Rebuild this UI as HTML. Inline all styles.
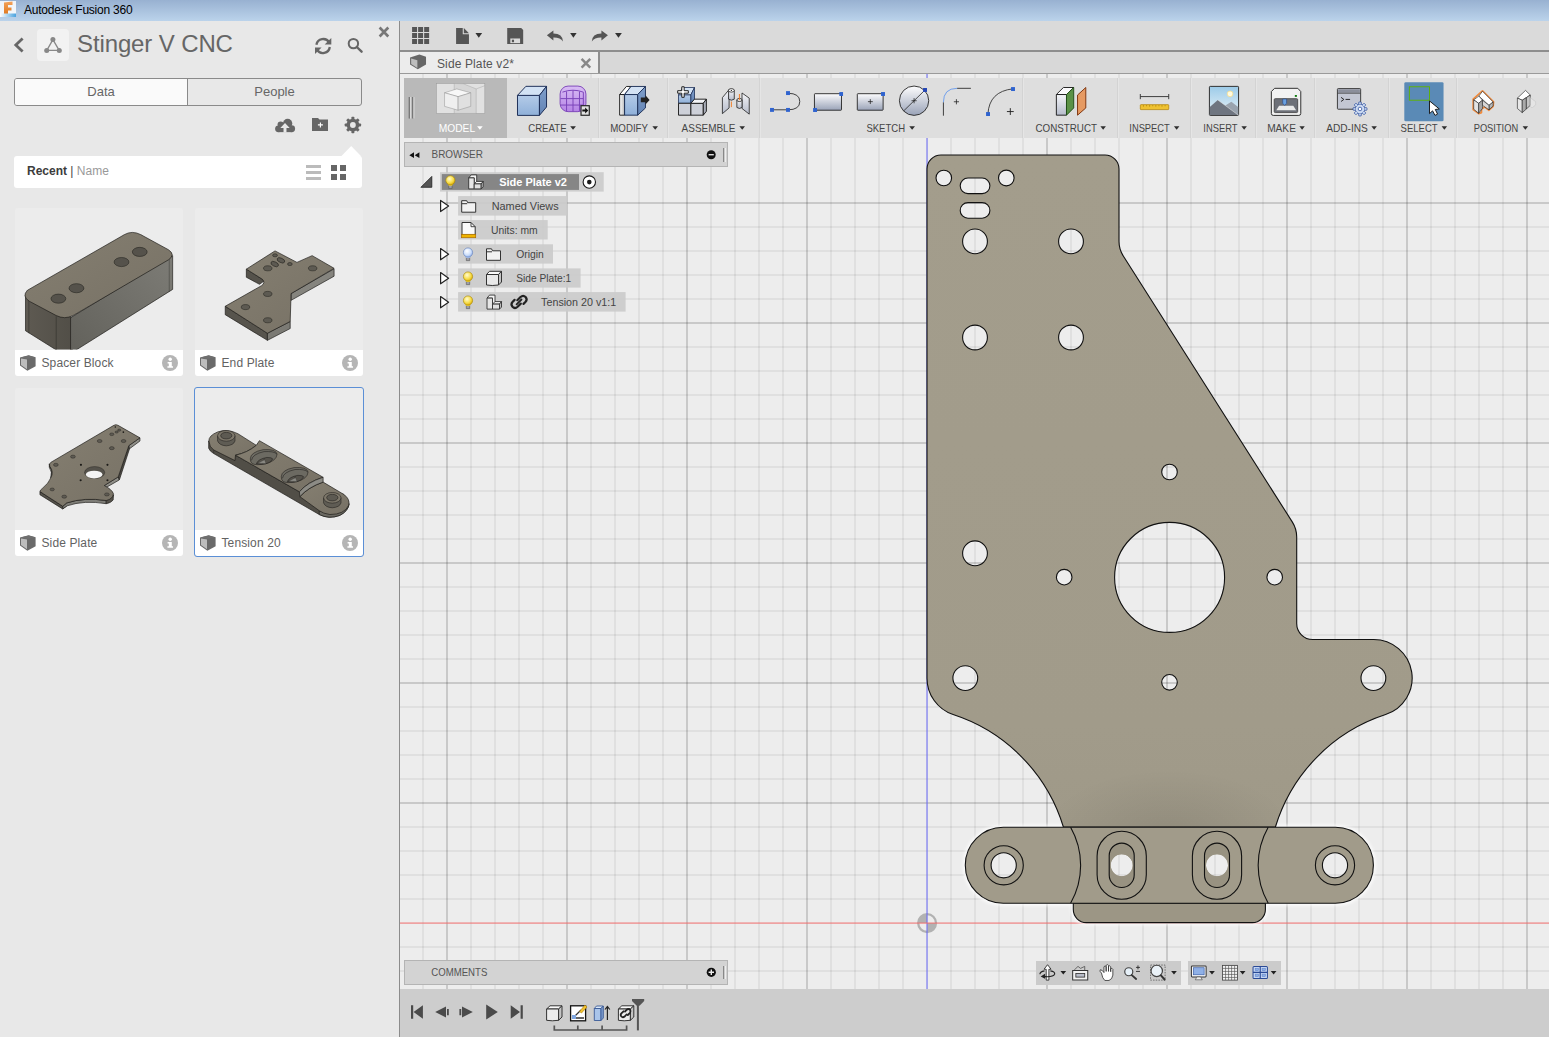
<!DOCTYPE html>
<html>
<head>
<meta charset="utf-8">
<title>Autodesk Fusion 360</title>
<style>
html,body{margin:0;padding:0;}
body{width:1549px;height:1037px;overflow:hidden;position:relative;background:#e8e8e8;font-family:"Liberation Sans",sans-serif;color:#555;}
.abs{position:absolute;}
#titlebar{left:0;top:0;width:1549px;height:21px;background:linear-gradient(#98b1d1,#bbd3eb);}
#titlebar .t{left:24px;top:2px;letter-spacing:-0.23px;font-size:12px;color:#000;line-height:16px;white-space:nowrap;}
#left{left:0;top:21px;width:399px;height:1016px;background:#e8e8e8;}
#vdiv{left:399px;top:21px;width:1px;height:1016px;background:#8c8c8c;}
#topbar{left:400px;top:21px;width:1149px;height:29px;background:#dadada;}
#topline{left:400px;top:50px;width:1149px;height:2px;background:#8e8e8e;}
#tabbar{left:400px;top:52px;width:1149px;height:21px;background:#d8d8d8;}
#tabline{left:400px;top:73px;width:1149px;height:1px;background:#9a9a9a;}
#tab{left:400px;top:52px;width:198px;height:21px;background:#ececec;border-right:2px solid #8e8e8e;}
#canvas{left:400px;top:74px;width:1149px;height:915px;}
#bottombar{left:400px;top:989px;width:1149px;height:48px;background:#cdcdcd;}
.lbl{font-size:11px;color:#444;white-space:nowrap;line-height:12px;}
.card{background:#ececec;width:168px;height:168px;border-radius:3px;overflow:hidden;}
.card .cap{left:0;top:142px;width:168px;height:26px;background:#fff;}
.card .cap span{left:26.500px;top:6px;font-size:12px;color:#626262;line-height:14px;white-space:nowrap;letter-spacing:0.12px;}
</style>
</head>
<body>
<div id="titlebar" class="abs"><span class="abs t">Autodesk Fusion 360</span></div>
<div id="left" class="abs"></div>
<div id="vdiv" class="abs"></div>
<div id="topbar" class="abs"></div>
<div id="topline" class="abs"></div>
<div id="tabbar" class="abs"></div>
<div id="tabline" class="abs"></div>
<div id="tab" class="abs"></div>
<div id="canvas" class="abs"><svg class="abs" style="left:0;top:0" width="1149" height="915" viewBox="400 74 1149 915">
<defs><linearGradient id="pg" x1="0" y1="0" x2="0" y2="1"><stop offset="0" stop-color="#a39d8c"/><stop offset="0.85" stop-color="#a19b8a"/><stop offset="1" stop-color="#9f9988"/></linearGradient><radialGradient id="sh" gradientUnits="userSpaceOnUse" cx="1169" cy="832" r="125" gradientTransform="translate(1169 832) scale(1 0.5) translate(-1169 -832)"><stop offset="0" stop-color="#000" stop-opacity="0.085"/><stop offset="1" stop-color="#000" stop-opacity="0"/></radialGradient></defs>
<rect x="400" y="74" width="1149" height="915" fill="#ededed"/>
<path d="M423 74V989M471 74V989M495 74V989M519 74V989M543 74V989M591 74V989M615 74V989M639 74V989M663 74V989M711 74V989M735 74V989M759 74V989M783 74V989M831 74V989M855 74V989M879 74V989M903 74V989M951 74V989M975 74V989M999 74V989M1023 74V989M1071 74V989M1095 74V989M1119 74V989M1143 74V989M1191 74V989M1215 74V989M1239 74V989M1263 74V989M1311 74V989M1335 74V989M1359 74V989M1383 74V989M1431 74V989M1455 74V989M1479 74V989M1503 74V989" stroke="#000" stroke-opacity="0.075" stroke-width="1.5" fill="none"/>
<path d="M400 227H1549M400 251H1549M400 275H1549M400 299H1549M400 347H1549M400 371H1549M400 395H1549M400 419H1549M400 467H1549M400 491H1549M400 515H1549M400 539H1549M400 587H1549M400 611H1549M400 635H1549M400 659H1549M400 707H1549M400 731H1549M400 755H1549M400 779H1549M400 827H1549M400 851H1549M400 875H1549M400 899H1549M400 947H1549M400 971H1549" stroke="#000" stroke-opacity="0.075" stroke-width="1.5" fill="none"/>
<path d="M447 74V989M567 74V989M687 74V989M807 74V989M1047 74V989M1167 74V989M1287 74V989M1407 74V989M1527 74V989" stroke="#000" stroke-opacity="0.2" stroke-width="1.5" fill="none"/>
<path d="M400 203H1549M400 323H1549M400 443H1549M400 563H1549M400 683H1549M400 803H1549" stroke="#000" stroke-opacity="0.2" stroke-width="1.5" fill="none"/>
<g><circle cx="927.1" cy="923.1" r="8.9" fill="none" stroke="#b2b2b2" stroke-width="2.3"/><path d="M927.1 923.1V914.2A8.9 8.9 0 0 0 918.2 923.1Z" fill="#b2b2b2"/><path d="M927.1 923.1V932A8.9 8.9 0 0 0 936 923.1Z" fill="#b2b2b2"/></g>
<path d="M927.05 74V989" stroke="#6c6cf0" stroke-opacity="0.58" stroke-width="1.9" fill="none"/>
<path d="M400 923.1H1549" stroke="#f06c6c" stroke-opacity="0.58" stroke-width="1.9" fill="none"/>
<filter id="bl" x="-5%" y="-20%" width="110%" height="140%"><feGaussianBlur stdDeviation="1.6"/></filter>
<path d="M1003.3 827.3H1335.4A38 38 0 0 1 1335.4 903.3H1265.4V909.6A13 13 0 0 1 1252.4 922.6H1086.3A13 13 0 0 1 1073.3 909.6V903.3H1003.3A38 38 0 0 1 1003.3 827.3Z" fill="none" stroke="#fff" stroke-opacity="0.75" stroke-width="5" filter="url(#bl)"/>
<path d="M941 155H1105A14 14 0 0 1 1119 169V241.5Q1119 249.2 1123.3 256L1292.4 522.1Q1296.7 528.9 1296.7 537V623.5A16 16 0 0 0 1312.7 639.5H1373.4A38.5 38.5 0 0 1 1385.6 714.6A170.4 170.4 0 0 0 1275.4 827H1063.4A170.4 170.4 0 0 0 953.1 714.6A38.5 38.5 0 0 1 927 678.1V169A14 14 0 0 1 941 155ZM936.0 178a7.8 7.8 0 1 0 15.6 0a7.8 7.8 0 1 0 -15.6 0ZM998.5 178a7.8 7.8 0 1 0 15.6 0a7.8 7.8 0 1 0 -15.6 0ZM968.0 178H982.1a7.799999999999997 7.799999999999997 0 0 1 0 15.599999999999994H968.0a7.799999999999997 7.799999999999997 0 0 1 0 -15.599999999999994ZM968.0 202.6H982.1a7.799999999999997 7.799999999999997 0 0 1 0 15.599999999999994H968.0a7.799999999999997 7.799999999999997 0 0 1 0 -15.599999999999994ZM962.6 241.4a12.4 12.4 0 1 0 24.8 0a12.4 12.4 0 1 0 -24.8 0ZM1058.6 241.4a12.4 12.4 0 1 0 24.8 0a12.4 12.4 0 1 0 -24.8 0ZM962.6 337.5a12.4 12.4 0 1 0 24.8 0a12.4 12.4 0 1 0 -24.8 0ZM1058.6 337.5a12.4 12.4 0 1 0 24.8 0a12.4 12.4 0 1 0 -24.8 0ZM962.6 553.3a12.4 12.4 0 1 0 24.8 0a12.4 12.4 0 1 0 -24.8 0ZM952.9 678.1a12.4 12.4 0 1 0 24.8 0a12.4 12.4 0 1 0 -24.8 0ZM1361.0 678.1a12.4 12.4 0 1 0 24.8 0a12.4 12.4 0 1 0 -24.8 0ZM1161.7 472a7.8 7.8 0 1 0 15.6 0a7.8 7.8 0 1 0 -15.6 0ZM1056.4 577.2a7.8 7.8 0 1 0 15.6 0a7.8 7.8 0 1 0 -15.6 0ZM1266.9 577.2a7.8 7.8 0 1 0 15.6 0a7.8 7.8 0 1 0 -15.6 0ZM1161.7 682.3a7.8 7.8 0 1 0 15.6 0a7.8 7.8 0 1 0 -15.6 0ZM1114.6 577.4a55 55 0 1 0 110 0a55 55 0 1 0 -110 0Z" fill="url(#pg)" fill-rule="evenodd" stroke="#111" stroke-width="1.1"/>
<path d="M941 155H1105A14 14 0 0 1 1119 169V241.5Q1119 249.2 1123.3 256L1292.4 522.1Q1296.7 528.9 1296.7 537V623.5A16 16 0 0 0 1312.7 639.5H1373.4A38.5 38.5 0 0 1 1385.6 714.6A170.4 170.4 0 0 0 1275.4 827H1063.4A170.4 170.4 0 0 0 953.1 714.6A38.5 38.5 0 0 1 927 678.1V169A14 14 0 0 1 941 155ZM936.0 178a7.8 7.8 0 1 0 15.6 0a7.8 7.8 0 1 0 -15.6 0ZM998.5 178a7.8 7.8 0 1 0 15.6 0a7.8 7.8 0 1 0 -15.6 0ZM968.0 178H982.1a7.799999999999997 7.799999999999997 0 0 1 0 15.599999999999994H968.0a7.799999999999997 7.799999999999997 0 0 1 0 -15.599999999999994ZM968.0 202.6H982.1a7.799999999999997 7.799999999999997 0 0 1 0 15.599999999999994H968.0a7.799999999999997 7.799999999999997 0 0 1 0 -15.599999999999994ZM962.6 241.4a12.4 12.4 0 1 0 24.8 0a12.4 12.4 0 1 0 -24.8 0ZM1058.6 241.4a12.4 12.4 0 1 0 24.8 0a12.4 12.4 0 1 0 -24.8 0ZM962.6 337.5a12.4 12.4 0 1 0 24.8 0a12.4 12.4 0 1 0 -24.8 0ZM1058.6 337.5a12.4 12.4 0 1 0 24.8 0a12.4 12.4 0 1 0 -24.8 0ZM962.6 553.3a12.4 12.4 0 1 0 24.8 0a12.4 12.4 0 1 0 -24.8 0ZM952.9 678.1a12.4 12.4 0 1 0 24.8 0a12.4 12.4 0 1 0 -24.8 0ZM1361.0 678.1a12.4 12.4 0 1 0 24.8 0a12.4 12.4 0 1 0 -24.8 0ZM1161.7 472a7.8 7.8 0 1 0 15.6 0a7.8 7.8 0 1 0 -15.6 0ZM1056.4 577.2a7.8 7.8 0 1 0 15.6 0a7.8 7.8 0 1 0 -15.6 0ZM1266.9 577.2a7.8 7.8 0 1 0 15.6 0a7.8 7.8 0 1 0 -15.6 0ZM1161.7 682.3a7.8 7.8 0 1 0 15.6 0a7.8 7.8 0 1 0 -15.6 0ZM1114.6 577.4a55 55 0 1 0 110 0a55 55 0 1 0 -110 0Z" fill="url(#sh)" fill-rule="evenodd" stroke="none"/>
<path d="M1073.3 903.3V909.6A13 13 0 0 0 1086.3 922.6H1252.4A13 13 0 0 0 1265.4 909.6V903.3Z" fill="#9c9685" stroke="#111" stroke-width="1.1"/>
<path d="M1003.3 827.3H1335.4A38 38 0 0 1 1335.4 903.3H1003.3A38 38 0 0 1 1003.3 827.3ZM991.1 865.3a12.6 12.6 0 1 0 25.2 0a12.6 12.6 0 1 0 -25.2 0ZM1322.4 865.3a12.6 12.6 0 1 0 25.2 0a12.6 12.6 0 1 0 -25.2 0ZM1110.7 865.3a11 11 0 1 0 22 0a11 11 0 1 0 -22 0ZM1206 865.3a11 11 0 1 0 22 0a11 11 0 1 0 -22 0Z" fill="#a19b8a" fill-rule="evenodd" stroke="none"/>
<path d="M1003.3 827.3H1335.4A38 38 0 0 1 1335.4 903.3H1003.3A38 38 0 0 1 1003.3 827.3Z" fill="none" stroke="#111" stroke-width="1.1"/>
<path d="M1070.6 827.3A77 77 0 0 1 1070.6 903.3M1268.2 827.3A77 77 0 0 0 1268.2 903.3" fill="none" stroke="#111" stroke-width="1.1"/>
<circle cx="1003.7" cy="865.3" r="19.6" fill="none" stroke="#111" stroke-width="1.1"/>
<circle cx="1003.7" cy="865.3" r="12.6" fill="none" stroke="#111" stroke-width="1.1"/>
<circle cx="1335" cy="865.3" r="19.6" fill="none" stroke="#111" stroke-width="1.1"/>
<circle cx="1335" cy="865.3" r="12.6" fill="none" stroke="#111" stroke-width="1.1"/>
<rect x="1097.1000000000001" y="831.3" width="49.200" height="68" rx="24.600" fill="none" stroke="#111" stroke-width="1.1"/>
<path d="M1109.2 855.6a12.5 12.5 0 0 1 25 0V875a12.5 12.5 0 0 1 -25 0ZM1110.7 865.3a11 11 0 1 0 22 0a11 11 0 1 0 -22 0Z" fill="#989281" fill-rule="evenodd" stroke="none"/>
<rect x="1109.2" y="843.1" width="25" height="44.400" rx="12.500" fill="none" stroke="#111" stroke-width="1.1"/>
<rect x="1192.4" y="831.3" width="49.200" height="68" rx="24.600" fill="none" stroke="#111" stroke-width="1.1"/>
<path d="M1204.5 855.6a12.5 12.5 0 0 1 25 0V875a12.5 12.5 0 0 1 -25 0ZM1206 865.3a11 11 0 1 0 22 0a11 11 0 1 0 -22 0Z" fill="#989281" fill-rule="evenodd" stroke="none"/>
<rect x="1204.5" y="843.1" width="25" height="44.400" rx="12.500" fill="none" stroke="#111" stroke-width="1.1"/>
</svg></div>
<div id="bottombar" class="abs"></div>
<!-- LEFT PANEL -->
<svg class="abs" style="left:0;top:0" width="20" height="21" viewBox="0 0 20 21"><defs><linearGradient id="fg" x1="0" y1="0" x2="0" y2="1"><stop offset="0" stop-color="#f3a25a"/><stop offset="1" stop-color="#e07a22"/></linearGradient><linearGradient id="fb" x1="0" y1="0" x2="1" y2="0"><stop offset="0" stop-color="#fff"/><stop offset="1" stop-color="#4aa3df"/></linearGradient></defs>
<rect x="0" y="1" width="16" height="16" fill="#fff" fill-opacity="0.85"/><path d="M4 14V2.5L12.5 1.5V5H8V7.5H11.5V10.5H8V14Z" fill="url(#fg)"/><rect x="0" y="13.5" width="16" height="3.5" fill="url(#fb)"/></svg>
<svg class="abs" style="left:10px;top:34px" width="20" height="22" viewBox="10 34 20 22"><path d="M22.6 38.6L15.8 45.1L22.6 51.6" fill="none" stroke="#666" stroke-width="2.8"/></svg>
<div class="abs" style="left:37px;top:29px;width:32px;height:32px;background:#f2f2f2;border-radius:4px;"></div>
<svg class="abs" style="left:37px;top:29px" width="32" height="32" viewBox="37 29 32 32"><path d="M52.9 39.6L46.8 50.4H59.2Z" fill="none" stroke="#888" stroke-width="1.3"/><circle cx="52.9" cy="39.4" r="2.5" fill="#888"/><circle cx="46.7" cy="50.4" r="2.5" fill="#888"/><circle cx="59.3" cy="50.4" r="2.5" fill="#888"/></svg>
<div class="abs" id="ptitle" style="left:77px;top:30px;font-size:24px;letter-spacing:-0.12px;line-height:28px;color:#666;white-space:nowrap;">Stinger V CNC</div>
<svg class="abs" style="left:310px;top:22px" width="85" height="38" viewBox="310 22 85 38">
<g fill="none" stroke="#666" stroke-width="2.3"><path d="M316.4 44.8A6.9 6.9 0 0 1 329.2 42.5"/><path d="M329.8 47A6.9 6.9 0 0 1 317 49.6"/></g>
<path d="M331.3 38V44.6H324.7Z" fill="#666"/><path d="M315 54V47.4H321.6Z" fill="#666"/>
<circle cx="353.4" cy="43.6" r="4.7" fill="none" stroke="#666" stroke-width="2"/><path d="M356.8 47L361.6 51.7" stroke="#666" stroke-width="2.4" stroke-linecap="round"/>
<path d="M379.6 27.5L388.3 36.5M388.3 27.5L379.6 36.5" stroke="#777" stroke-width="2.6"/></svg>
<div class="abs" style="left:14px;top:78px;width:346px;height:26px;border:1px solid #8a8a8a;border-radius:3px;background:#e8e8e8;"></div>
<div class="abs" style="left:15px;top:79px;width:172px;height:26px;background:#fafafa;border-right:1px solid #8a8a8a;border-radius:2px 0 0 2px;"></div>
<div class="abs" style="left:15px;top:84px;width:172px;text-align:center;font-size:13px;line-height:16px;color:#666;">Data</div>
<div class="abs" style="left:188px;top:84px;width:173px;text-align:center;font-size:13px;line-height:16px;color:#666;">People</div>
<svg class="abs" style="left:270px;top:114px" width="95" height="22" viewBox="270 114 95 22">
<g transform="translate(260 110) scale(0.08197)"><g fill="#666"><circle cx="226" cy="230" r="42"/><circle cx="252" cy="178" r="38"/><circle cx="337" cy="165" r="57"/><circle cx="386" cy="228" r="42"/><rect x="226" y="190" width="160" height="80"/></g><path d="M305 158L362 220H323V274H287V220H248Z" fill="#e8e8e8"/></g>
<path d="M312 118H318L319.5 119.6H328V131H312Z" fill="#666"/><path d="M312 118.9H318.5" stroke="#e8e8e8" stroke-width="0" /><path d="M320.4 122.4V127.4M317.9 124.9H322.9" stroke="#fff" stroke-width="1.1"/>
<g transform="translate(352.9 125)"><circle r="4.6" fill="none" stroke="#666" stroke-width="3.4"/><g fill="#666"><rect x="-1.5" y="-8.2" width="3" height="3.2" rx="0.8"/><rect x="-1.5" y="-8.2" width="3" height="3.2" rx="0.8" transform="rotate(45)"/><rect x="-1.5" y="-8.2" width="3" height="3.2" rx="0.8" transform="rotate(90)"/><rect x="-1.5" y="-8.2" width="3" height="3.2" rx="0.8" transform="rotate(135)"/><rect x="-1.5" y="-8.2" width="3" height="3.2" rx="0.8" transform="rotate(180)"/><rect x="-1.5" y="-8.2" width="3" height="3.2" rx="0.8" transform="rotate(225)"/><rect x="-1.5" y="-8.2" width="3" height="3.2" rx="0.8" transform="rotate(270)"/><rect x="-1.5" y="-8.2" width="3" height="3.2" rx="0.8" transform="rotate(315)"/></g></g></svg>
<div class="abs" style="left:14px;top:156px;width:348px;height:32px;background:#fff;border-radius:3px;"></div>
<svg class="abs" style="left:300px;top:144px" width="65" height="40" viewBox="300 144 65 40"><path d="M341 156.5L351.2 146L361.4 156.5Z" fill="#fff"/>
<path d="M306 165H321V168H306ZM306 171H321V174H306ZM306 177H321V180H306Z" fill="#bbb"/><path d="M331 165H337V171H331ZM340 165H346V171H340ZM331 174H337V180H331ZM340 174H346V180H340Z" fill="#666"/></svg>
<div class="abs" style="left:27px;top:164px;font-size:12px;line-height:15px;white-space:nowrap;color:#444;"><b style="color:#3c3c3c">Recent</b> <span style="color:#444">|</span> <span style="color:#999">Name</span></div>
<!-- CARDS -->
<svg width="0" height="0" style="position:absolute"><defs>
<g id="cubeico"><path d="M0 2.6L8.6 0.3L15.6 2.2V11.3L7.4 15.8L0 10.6Z" fill="#6a6a6a"/><path d="M1 3.6L7 4.6V14.3L1 10.1Z" fill="#bdbdbd"/><path d="M0.6 2.6L8.6 0.6L15 2.3L7.4 4Z" fill="#6f6f6f"/></g>
<g id="infoico"><circle cx="8" cy="8" r="8" fill="#b5b5b5"/><circle cx="8.2" cy="4.3" r="1.7" fill="#fff"/><path d="M5.6 6.9H9.8V11.2H11V12.8H5.4V11.2H6.8V8.5H5.6Z" fill="#fff"/></g>
<linearGradient id="topf" x1="0" y1="0" x2="1" y2="1"><stop offset="0" stop-color="#857f71"/><stop offset="1" stop-color="#777165"/></linearGradient>
<linearGradient id="sideR" x1="0" y1="1" x2="1" y2="0"><stop offset="0" stop-color="#62615b"/><stop offset="1" stop-color="#7d7c76"/></linearGradient>
<linearGradient id="sideL" x1="0" y1="0" x2="1" y2="0"><stop offset="0" stop-color="#5e5a52"/><stop offset="1" stop-color="#514e47"/></linearGradient>
</defs></svg>

<div class="abs card" style="left:15px;top:208px;"><div class="abs cap"><span class="abs">Spacer Block</span></div>
<svg class="abs" style="left:-1px;top:-3px" width="172" height="175" viewBox="0 0 1019 1037">
<clipPath id="c1"><rect x="0" y="0" width="1019" height="857"/></clipPath>
<g clip-path="url(#c1)" stroke="#1c1b18" stroke-width="4" stroke-linejoin="round">
<path d="M68 540V745L255 862H345V668Z" fill="url(#sideL)"/>
<path d="M250 660V870" stroke="#2a2925" stroke-width="3"/>
<path d="M335 668V880L940 500V300Z" fill="url(#sideR)"/>
<path d="M920 320V515" stroke="#3a3935" stroke-width="3" fill="none"/>
<path d="M88 560V760" stroke="#2a2925" stroke-width="3" fill="none"/>
<path d="M80 505L655 175Q700 150 750 175L915 265Q960 295 915 325L350 655Q300 680 250 655L90 570Q45 540 80 505Z" fill="url(#topf)"/>
<g stroke-width="3"><ellipse cx="263" cy="555" rx="44" ry="27" fill="#55524b"/><ellipse cx="370" cy="493" rx="44" ry="27" fill="#55524b"/><ellipse cx="637" cy="338" rx="44" ry="27" fill="#55524b"/><ellipse cx="745" cy="278" rx="44" ry="27" fill="#55524b"/></g>
</g></svg>
<svg class="abs" style="left:5px;top:147px" width="16" height="16" viewBox="0 0 16 16"><use href="#cubeico"/></svg>
<svg class="abs" style="left:147px;top:147px" width="16" height="16" viewBox="0 0 16 16"><use href="#infoico"/></svg>
</div>

<div class="abs card" style="left:195px;top:208px;"><div class="abs cap"><span class="abs">End Plate</span></div>
<svg class="abs" style="left:-1px;top:-3px" width="172" height="175" viewBox="0 0 1019 1037">
<g stroke="#1c1b18" stroke-width="4" stroke-linejoin="round">
<path d="M185 600V650L435 802V760Z" fill="#57544d"/>
<path d="M435 760V802L570 732V690Z" fill="#7b7a74"/>
<path d="M575 525V565L830 422V378Z" fill="#85847e"/>
<path d="M310 380V428L388 470L418 448Z" fill="#55524b"/>
<path d="M480 272L610 340L700 300L830 375L575 525L570 690L435 760L185 600L400 478Q425 462 405 440L310 380Z" fill="url(#topf)"/>
<g stroke-width="3" fill="#5d5a52"><ellipse cx="437" cy="375" rx="25" ry="15"/><ellipse cx="703" cy="375" rx="25" ry="15"/><ellipse cx="437" cy="527" rx="25" ry="15"/><ellipse cx="305" cy="605" rx="25" ry="15"/><ellipse cx="437" cy="683" rx="25" ry="15"/><ellipse cx="480" cy="298" rx="14" ry="9"/><ellipse cx="568" cy="350" rx="14" ry="9"/><ellipse cx="515" cy="328" rx="24" ry="13" transform="rotate(25 515 328)"/><ellipse cx="478" cy="350" rx="24" ry="13" transform="rotate(25 478 350)"/></g>
</g></svg>
<svg class="abs" style="left:5px;top:147px" width="16" height="16" viewBox="0 0 16 16"><use href="#cubeico"/></svg>
<svg class="abs" style="left:147px;top:147px" width="16" height="16" viewBox="0 0 16 16"><use href="#infoico"/></svg>
</div>

<div class="abs card" style="left:15px;top:388px;"><div class="abs cap"><span class="abs">Side Plate</span></div>
<svg class="abs" style="left:15px;top:32px" width="120" height="100" viewBox="0 0 1244 1037">
<g stroke="#1c1b18" stroke-width="7" stroke-linejoin="round">
<path d="M103 742V775L338 922L380 892V860L340 895Z" fill="#55524b"/>
<path d="M340 895V922L385 890Q560 830 790 868V835Q560 800 380 860Z" fill="#7f7e78"/>
<path d="M790 835V868Q840 860 862 830L866 775Q850 815 790 835Z" fill="#55524b"/>
<path d="M770 680L780 705L925 622L915 590Z" fill="#8f8e88"/>
<path d="M1025 265L1032 298L927 620L915 590Z" fill="#4d4a44"/>
<path d="M1140 185V218L1032 298L1025 265Z" fill="#8f8e88"/>
<path d="M200 455V490Q235 540 215 600Q250 540 205 480Z" fill="#55524b"/>
<path d="M870 55Q890 42 912 55L1140 185L1025 265L915 590L770 680Q850 720 865 765Q860 820 790 835Q560 800 380 860L340 895L103 742Q108 722 125 712Q200 650 215 600Q250 540 205 480Q195 455 215 440Z" fill="url(#topf)"/>
<ellipse cx="670" cy="545" rx="105" ry="62" fill="#55524b" stroke-width="4"/><ellipse cx="665" cy="566" rx="86" ry="40" fill="#f4f4f4" stroke="none"/>
<g stroke-width="4" fill="#5d5a52"><ellipse cx="722" cy="218" rx="25" ry="16"/><ellipse cx="970" cy="218" rx="25" ry="16"/><ellipse cx="848" cy="292" rx="25" ry="16"/><ellipse cx="445" cy="380" rx="25" ry="16"/><ellipse cx="268" cy="465" rx="25" ry="16"/><ellipse cx="230" cy="720" rx="22" ry="15"/><ellipse cx="355" cy="795" rx="25" ry="16"/><ellipse cx="797" cy="772" rx="25" ry="16"/><ellipse cx="848" cy="148" rx="22" ry="14"/><ellipse cx="898" cy="125" rx="17" ry="11"/><ellipse cx="925" cy="105" rx="17" ry="11"/></g>
<g fill="#1c1b18" stroke="none"><circle cx="528" cy="465" r="11"/><circle cx="803" cy="465" r="11"/><circle cx="525" cy="625" r="11"/><circle cx="803" cy="625" r="11"/><circle cx="968" cy="125" r="9"/><circle cx="885" cy="72" r="8"/></g>
</g></svg>
<svg class="abs" style="left:5px;top:147px" width="16" height="16" viewBox="0 0 16 16"><use href="#cubeico"/></svg>
<svg class="abs" style="left:147px;top:147px" width="16" height="16" viewBox="0 0 16 16"><use href="#infoico"/></svg>
</div>

<div class="abs card" style="left:195px;top:388px;"><div class="abs cap"><span class="abs">Tension 20</span></div>
<svg class="abs" style="left:9px;top:37px" width="150" height="100" viewBox="0 0 1549 1033">
<g stroke="#1c1b18" stroke-width="7" stroke-linejoin="round">
<path d="M48 165V240Q60 272 100 295L1190 925Q1290 975 1400 935Q1490 890 1498 815L1440 715L985 690L340 320L100 250Z" fill="#514e47"/>
<path d="M1190 885V925Q1290 975 1400 935Q1490 890 1498 815Q1470 870 1400 895Q1290 935 1190 885Z" fill="#6b6962"/>
<path d="M100 258V295" fill="none" stroke-width="4"/>
<path d="M50 165Q48 110 140 72Q240 35 350 90L540 210Q450 285 325 312L320 368L100 258Q55 230 50 165Z" fill="url(#topf)"/>
<path d="M1230 590L1440 715Q1510 760 1495 830Q1450 925 1300 925Q1230 915 1190 885L990 740Q1080 640 1230 590Z" fill="url(#topf)"/>
<path d="M572 162L540 210Q450 285 325 312L340 320L985 690Q1070 590 1230 540Z" fill="url(#topf)"/>
<path d="M1230 540V590Q1080 640 990 740L985 690Q1070 590 1230 540Z" fill="#8c8b85"/>
<g stroke-width="5.500">
<path d="M478 350Q480 280 610 255Q740 245 755 300Q750 370 640 400Q540 420 500 400Q478 385 478 350Z" fill="#6c6a62"/>
<path d="M490 365Q500 300 620 275Q720 268 752 300" fill="none"/>
<path d="M540 400Q560 350 650 335Q700 335 710 350Q690 390 640 400Q590 412 540 400Z" fill="#55524b"/>
<path d="M625 342L600 405" fill="none" stroke-width="3"/><path d="M555 395L625 360L640 398Z" fill="#8a8983" stroke-width="2"/>
<path d="M798 535Q800 465 930 440Q1060 430 1075 485Q1070 555 960 585Q860 605 820 585Q798 570 798 535Z" fill="#6c6a62"/>
<path d="M810 550Q820 485 940 460Q1040 453 1072 485" fill="none"/>
<path d="M860 585Q880 535 970 520Q1020 520 1030 535Q1010 575 960 585Q910 597 860 585Z" fill="#55524b"/>
<path d="M945 527L920 590" fill="none" stroke-width="3"/><path d="M875 580L945 545L960 583Z" fill="#8a8983" stroke-width="2"/>
<path d="M140 115V165Q160 212 230 215Q305 210 320 165V112Z" fill="#5f5c54"/><ellipse cx="230" cy="112" rx="90" ry="55" fill="#7d776a"/><ellipse cx="230" cy="110" rx="58" ry="34" fill="#5d5a52"/>
<path d="M1235 755V805Q1255 852 1325 855Q1400 850 1415 805V752Z" fill="#5f5c54"/><ellipse cx="1325" cy="752" rx="90" ry="55" fill="#7d776a"/><ellipse cx="1325" cy="750" rx="58" ry="34" fill="#5d5a52"/>
</g></g></svg>
<svg class="abs" style="left:5px;top:147px" width="16" height="16" viewBox="0 0 16 16"><use href="#cubeico"/></svg>
<svg class="abs" style="left:147px;top:147px" width="16" height="16" viewBox="0 0 16 16"><use href="#infoico"/></svg>
</div>
<div class="abs" style="left:194px;top:387px;width:168px;height:168px;border:1px solid #5b8fd6;border-radius:3px;"></div>


<!-- TOP ICONS + TAB -->
<svg class="abs" style="left:400px;top:18px" width="240" height="60" viewBox="0 0 1549 387">
<g fill="#555"><path d="M78 58h32v32h-32zM117 58h32v32h-32zM156 58h32v32h-32zM78 97h32v32h-32zM117 97h32v32h-32zM156 97h32v32h-32zM78 136h32v32h-32zM117 136h32v32h-32zM156 136h32v32h-32z"/>
<path d="M362 65H405V105H445V168H362Z"/><path d="M412 65L445 98H412Z"/><path d="M487 97H530L508.500 128Z" fill="#333"/>
<path d="M692 65H782L795 78V168H692Z"/><path d="M712 132H775V162H712Z" fill="#dadada"/><path d="M722 140H736V156H722Z" fill="#555"/>
<path d="M948 112L990 80V100Q1050 100 1052 152Q1035 125 990 126V145Z"/><path d="M1098 97H1140L1119 128Z" fill="#333"/>
<path d="M1342 112L1300 80V100Q1240 100 1238 152Q1255 125 1300 126V145Z"/><path d="M1388 97H1432L1410 128Z" fill="#333"/></g>
<path d="M65 255L125 235L168 250V300L115 330L65 300Z" fill="#666"/><path d="M72 262L112 272V322L72 297Z" fill="#bdbdbd"/>
<path d="M1172 264L1228 320M1228 264L1172 320" stroke="#888" stroke-width="16"/>
</svg>
<div class="abs" style="left:437px;top:57px;font-size:12px;line-height:14px;color:#555;white-space:nowrap;letter-spacing:0.12px" id="tabtxt">Side Plate v2*</div>
<!-- TOOLBAR -->
<div class="abs" style="left:404px;top:78px;width:1145px;height:60px;background:#dedede;"></div>
<div class="abs" style="left:404px;top:78px;width:103px;height:60px;background:#b9b9b9;"></div>
<svg class="abs" style="left:404px;top:78px" width="1145" height="60" viewBox="404 78 1145 60">
<g stroke-width="1" shape-rendering="crispEdges"><path d="M598.5 78V138M667.5 78V138M759.5 78V138M1022.5 78V138M1117.5 78V138M1190.5 78V138M1255.5 78V138M1314.5 78V138M1388.5 78V138M1456.5 78V138" stroke="#d3d3d3"/><path d="M599.5 78V138M668.5 78V138M760.5 78V138M1023.5 78V138M1118.5 78V138M1191.5 78V138M1256.5 78V138M1315.5 78V138M1389.5 78V138M1457.5 78V138" stroke="#e5e5e5"/></g>
<g font-family="Liberation Sans, sans-serif" font-size="10.6" fill="#454545" lengthAdjust="spacingAndGlyphs">
<text x="438.700" y="131.800" textLength="36.400" fill="#fff" lengthAdjust="spacingAndGlyphs">MODEL</text>
<text x="528.200" y="131.800" textLength="38.400" lengthAdjust="spacingAndGlyphs">CREATE</text>
<text x="610.300" y="131.800" textLength="37.700" lengthAdjust="spacingAndGlyphs">MODIFY</text>
<text x="681.600" y="131.800" textLength="53.700" lengthAdjust="spacingAndGlyphs">ASSEMBLE</text>
<text x="866.400" y="131.800" textLength="38.700" lengthAdjust="spacingAndGlyphs">SKETCH</text>
<text x="1035.500" y="131.800" textLength="61.500" lengthAdjust="spacingAndGlyphs">CONSTRUCT</text>
<text x="1129.300" y="131.800" textLength="40.500" lengthAdjust="spacingAndGlyphs">INSPECT</text>
<text x="1203.300" y="131.800" textLength="34.200" lengthAdjust="spacingAndGlyphs">INSERT</text>
<text x="1267.200" y="131.800" textLength="28.700" lengthAdjust="spacingAndGlyphs">MAKE</text>
<text x="1326.200" y="131.800" textLength="41.700" lengthAdjust="spacingAndGlyphs">ADD-INS</text>
<text x="1400.600" y="131.800" textLength="37" lengthAdjust="spacingAndGlyphs">SELECT</text>
<text x="1473.700" y="131.800" textLength="44.400" lengthAdjust="spacingAndGlyphs">POSITION</text>
</g>
<path d="M477.100 126.200h5.600l-2.800 3.500z" fill="#fff"/>
<g fill="#2e2e2e"><path d="M570.200 126.200h5.700l-2.850 3.500z"/><path d="M652.400 126.200h5.600l-2.800 3.500z"/><path d="M739.400 126.200h5.600l-2.800 3.500z"/><path d="M909.300 126.200h5.700l-2.850 3.500z"/><path d="M1100.400 126.200h5.500l-2.750 3.500z"/><path d="M1173.900 126.200h5.500l-2.750 3.500z"/><path d="M1241.400 126.200h5.500l-2.750 3.500z"/><path d="M1299.400 126.200h5.400l-2.700 3.500z"/><path d="M1371.400 126.200h5.500l-2.750 3.500z"/><path d="M1441.600 126.200h5.500l-2.750 3.500z"/><path d="M1522.600 126.200h5.500l-2.750 3.500z"/></g>
</svg>
<svg width="0" height="0" style="position:absolute"><defs>
<linearGradient id="bluF" x1="0" y1="0" x2="0" y2="1"><stop offset="0" stop-color="#b4cbe8"/><stop offset="1" stop-color="#8fb0d9"/></linearGradient>
<linearGradient id="bluS" x1="0" y1="0" x2="0" y2="1"><stop offset="0" stop-color="#7f9fcb"/><stop offset="1" stop-color="#6484b4"/></linearGradient>
<linearGradient id="gryF" x1="0" y1="0" x2="0" y2="1"><stop offset="0" stop-color="#fdfdfe"/><stop offset="1" stop-color="#9aa3b8"/></linearGradient>
<linearGradient id="gryB" x1="0" y1="0" x2="0" y2="1"><stop offset="0" stop-color="#f4f5f8"/><stop offset="1" stop-color="#b6bccb"/></linearGradient>
<linearGradient id="purp" x1="0" y1="0" x2="0" y2="1"><stop offset="0" stop-color="#d9bdf4"/><stop offset="1" stop-color="#b583e6"/></linearGradient>
<linearGradient id="sky" x1="0" y1="0" x2="0" y2="1"><stop offset="0" stop-color="#9ccbe8"/><stop offset="1" stop-color="#e8f2f8"/></linearGradient>
<linearGradient id="wht" x1="0" y1="0" x2="1" y2="0"><stop offset="0" stop-color="#fff"/><stop offset="1" stop-color="#b9b9b9"/></linearGradient>
</defs></svg>
<!-- A: MODEL + CREATE -->
<svg class="abs" style="left:400px;top:76px" width="200" height="66" viewBox="0 0 1549 511">
<path d="M68 163h8v167h-8zM96 163h8v167h-8z" fill="#4e4e4e"/><path d="M76 163h7v167h-7zM104 163h7v167h-7z" fill="#e6e6e6"/>
<rect x="282" y="58" width="375" height="232" fill="#e1e1e1" stroke="#999" stroke-width="4"/>
<path d="M420 58V290H590V100L490 60Z" fill="#d6d6d6" stroke="#999" stroke-width="3"/><path d="M590 100L657 75" stroke="#999" stroke-width="3"/>
<path d="M345 130L440 100L548 130L450 160Z" fill="#f7f7f7" stroke="#888" stroke-width="3.500" stroke-linejoin="round"/><path d="M345 130L450 160V265L345 235Z" fill="#efefef" stroke="#888" stroke-width="3.500" stroke-linejoin="round"/><path d="M450 160L548 130V235L450 265Z" fill="#e0e0e0" stroke="#888" stroke-width="3.500" stroke-linejoin="round"/>
<g stroke="#1b2d55" stroke-width="7.5" stroke-linejoin="round"><path d="M910 150H1080V305H910Z" fill="url(#bluF)"/><path d="M910 150L975 80H1135L1080 150Z" fill="#d3e2f4"/><path d="M1080 150L1135 80V240L1080 305Z" fill="url(#bluS)"/></g>
<rect x="1240" y="78" width="200" height="198" rx="62" fill="url(#purp)" stroke="#7d48b8" stroke-width="7.5"/>
<g stroke="#7a42b8" stroke-width="7.5" fill="none"><path d="M1290 120V275M1340 110V275M1390 120V270M1243 175H1420M1243 225H1420M1258 125Q1340 95 1420 125M1420 125V250"/></g>
<rect x="1402" y="230" width="64" height="74" fill="#e2e2e2" stroke="#222" stroke-width="9"/><path d="M1412 259h22v-15l24 23l-24 23v-15h-22z" fill="#111"/>
</svg>
<!-- B: MODIFY + ASSEMBLE -->
<svg class="abs" style="left:600px;top:78px" width="160" height="60" viewBox="0 0 1549 581">
<g stroke="#1a1a1a" stroke-width="9" stroke-linejoin="round"><path d="M190 160L255 82H300L238 160Z" fill="#fff"/><path d="M190 160H238V360H190Z" fill="url(#wht)"/></g>
<g stroke="#1b2d55" stroke-width="9" stroke-linejoin="round"><path d="M238 160H365V360H238Z" fill="url(#bluF)"/><path d="M238 160L300 82H440L365 160Z" fill="#d3e2f4"/><path d="M365 160L440 82V290L365 360Z" fill="url(#bluS)"/></g>
<path d="M395 190H440V168L480 212L440 257V235H395Z" fill="#222"/>
<g stroke="#1b2d55" stroke-width="7.5" stroke-linejoin="round"><path d="M760 162H880V245H760Z" fill="url(#bluF)"/><path d="M760 162L800 92H915L880 162Z" fill="#d3e2f4"/><path d="M880 162L915 92V205L880 245Z" fill="url(#bluS)"/></g>
<g stroke="#1a1a1a" stroke-width="9" stroke-linejoin="round"><path d="M760 245H880V360H760Z" fill="#cdd0d8"/><path d="M880 245H1000V360H880Z" fill="#cdd0d8"/><path d="M880 245L915 205H1030L1000 245Z" fill="#f2f3f6"/><path d="M1000 245L1030 205V322L1000 360Z" fill="#a9adb8"/></g>
<path d="M792 85H815V123H855V147H815V187H792V147H752V123H792Z" fill="#fff" stroke="#111" stroke-width="9" stroke-linejoin="round"/>
<g stroke="#1a1a1a" stroke-width="7.5" stroke-linejoin="round"><path d="M1185 190L1250 112V290L1185 345Z" fill="url(#gryB)"/><path d="M1245 120V205Q1272 225 1300 205V120Z" fill="url(#gryB)"/><ellipse cx="1272" cy="120" rx="28" ry="17" fill="#fff"/>
<path d="M1375 145L1445 195V350L1375 295Z" fill="url(#gryB)"/><path d="M1325 215V285Q1350 305 1375 285V215Z" fill="url(#gryB)"/><ellipse cx="1350" cy="213" rx="25" ry="15" fill="#eee"/></g>
<circle cx="1272" cy="120" r="6" fill="#222"/><path d="M1350 155V215M1272 228V282" stroke="#f47a1f" stroke-width="9"/>
</svg>
<!-- C: SKETCH 1-3 -->
<svg class="abs" style="left:760px;top:78px" width="160" height="60" viewBox="0 0 1549 581">
<path d="M115 308H270Q385 308 385 228Q385 148 270 148" fill="none" stroke="#333" stroke-width="9"/>
<g fill="#2f63cf"><rect x="97" y="290" width="38" height="38"/><rect x="252" y="290" width="38" height="38"/><rect x="252" y="127" width="38" height="38"/></g>
<rect x="527" y="152" width="262" height="160" rx="6" fill="url(#gryF)" stroke="#2a2a2a" stroke-width="9"/><g fill="#2f63cf"><rect x="768" y="136" width="36" height="38"/><rect x="514" y="291" width="38" height="38"/></g>
<rect x="942" y="152" width="250" height="160" rx="6" fill="url(#gryF)" stroke="#2a2a2a" stroke-width="9"/><rect x="1172" y="136" width="38" height="38" fill="#2f63cf"/><path d="M1068 205V252M1045 229H1092" stroke="#222" stroke-width="7.5"/>
</svg>
<!-- D: circle, fillet, arc -->
<svg class="abs" style="left:890px;top:78px" width="160" height="60" viewBox="0 0 1549 581">
<circle cx="233" cy="220" r="142" fill="url(#gryF)" stroke="#2a2a2a" stroke-width="9"/><path d="M133 318L335 120" stroke="#222" stroke-width="7.5"/><path d="M233 195V245M208 220H258" stroke="#222" stroke-width="7.5"/><rect x="320" y="97" width="38" height="38" fill="#2345b5"/>
<path d="M517 365V235" stroke="#333" stroke-width="9" fill="none"/><path d="M517 235Q517 100 650 100" stroke="#5b93ee" stroke-width="8" fill="none"/><path d="M650 100H783" stroke="#333" stroke-width="9"/><path d="M643 205V255M618 230H668" stroke="#222" stroke-width="7.5"/>
<path d="M948 350Q960 130 1190 105" fill="none" stroke="#3a3a3a" stroke-width="9"/><rect x="930" y="330" width="38" height="38" fill="#2f63cf"/><rect x="1172" y="88" width="38" height="38" fill="#2f63cf"/><path d="M1165 292V358M1132 325H1198" stroke="#222" stroke-width="9"/>
</svg>
<!-- E: CONSTRUCT + INSPECT -->
<svg class="abs" style="left:1020px;top:78px" width="160" height="60" viewBox="0 0 1549 581">
<g stroke="#1a1a1a" stroke-width="9" stroke-linejoin="round"><path d="M352 160L420 92H520L450 160Z" fill="#fafafc"/><path d="M352 160H450V360H352Z" fill="url(#gryB)"/><path d="M450 160L520 92V290L450 360Z" fill="#5b9247" stroke="#1f4d18"/></g>
<path d="M557 165L637 92V290L557 360Z" fill="#e69a62" stroke="#7a2e08" stroke-width="9" stroke-linejoin="round"/>
<path d="M1165 180H1440M1165 155V205M1440 155V205" stroke="#333" stroke-width="9" fill="none"/>
<rect x="1165" y="258" width="275" height="48" rx="6" fill="#efc232" stroke="#b8860b" stroke-width="7.5"/><path d="M1195 262v16M1225 262v12M1255 262v16M1285 262v12M1315 262v16M1345 262v12M1375 262v16M1405 262v12" stroke="#a67c00" stroke-width="6"/>
</svg>
<!-- F: INSERT MAKE ADD-INS -->
<svg class="abs" style="left:1190px;top:78px" width="200" height="60" viewBox="0 0 1549 465">
<rect x="150" y="65" width="226" height="225" rx="6" fill="url(#sky)" stroke="#2a2a2a" stroke-width="7.5"/><circle cx="310" cy="123" r="22" fill="#fffbe0" stroke="#f6dc8a" stroke-width="6"/>
<path d="M270 215L320 185L373 225V287H300Z" fill="#9aa3ae"/><path d="M153 225L215 170L373 287H153Z" fill="#6f7580"/><path d="M215 170L373 287" stroke="#e8e8e8" stroke-width="4"/>
<path d="M655 80H835L858 105V275Q858 290 843 290H645Q630 290 630 275V105Z" fill="#f2f2f2" stroke="#2a2a2a" stroke-width="7.5"/><rect x="652" y="160" width="182" height="108" rx="8" fill="#6d7078" stroke="#3a3a3a" stroke-width="6"/><path d="M690 215H800L822 250H668Z" fill="#eaeaea"/><path d="M718 163H748V195L733 213L718 195Z" fill="#6aa0e0" stroke="#1b3d80" stroke-width="4"/><rect x="812" y="132" width="16" height="14" fill="#0a7a0a"/>
<rect x="1142" y="82" width="180" height="160" rx="6" fill="#c3c7d3" stroke="#3a3a3a" stroke-width="7.5"/><rect x="1148" y="88" width="168" height="26" fill="#8b8f9b"/><path d="M1142 118H1322" stroke="#3a3a3a" stroke-width="6"/><path d="M1170 150L1192 166L1170 182M1205 166H1240" stroke="#222" stroke-width="7.5" fill="none"/>
<g transform="translate(1317 240)"><circle r="36" fill="#cddbf2" stroke="#2d4f9e" stroke-width="6"/><g fill="#cddbf2" stroke="#2d4f9e" stroke-width="6"><rect x="-10" y="-54" width="20" height="22" rx="4"/><rect x="-10" y="-54" width="20" height="22" rx="4" transform="rotate(45)"/><rect x="-10" y="-54" width="20" height="22" rx="4" transform="rotate(90)"/><rect x="-10" y="-54" width="20" height="22" rx="4" transform="rotate(135)"/><rect x="-10" y="-54" width="20" height="22" rx="4" transform="rotate(180)"/><rect x="-10" y="-54" width="20" height="22" rx="4" transform="rotate(225)"/><rect x="-10" y="-54" width="20" height="22" rx="4" transform="rotate(270)"/><rect x="-10" y="-54" width="20" height="22" rx="4" transform="rotate(315)"/></g><circle r="33" fill="#cddbf2"/><circle r="14" fill="#fff" stroke="#2d4f9e" stroke-width="6"/></g>
</svg>
<!-- G: SELECT POSITION -->
<svg class="abs" style="left:1389px;top:78px" width="160" height="60" viewBox="0 0 1549 581">
<rect x="148" y="40" width="380" height="380" rx="14" fill="#5a8ab6"/><rect x="197" y="85" width="195" height="130" fill="none" stroke="#5fb400" stroke-width="9"/>
<path d="M392 222V345L422 318L445 362L470 350L448 305L487 300Z" fill="#fff" stroke="#111" stroke-width="9" stroke-linejoin="round"/>
<g stroke-linejoin="round"><path d="M905 125L1012 232L1008 275L968 312L925 280L895 300V335L868 345L815 305V205Z" fill="#fff" stroke="#f08a3c" stroke-width="17"/>
<g stroke="#222" stroke-width="6"><path d="M905 128L1008 232L968 265L870 175Z" fill="#fff"/><path d="M820 212L870 175L905 215L868 245Z" fill="#fff"/><path d="M820 212L868 245V342L820 302Z" fill="#e4e4e4"/><path d="M868 245L905 215V295L868 342Z" fill="#a8a8a8"/><path d="M968 265L1008 232V272L968 308Z" fill="#b5b5b5"/><path d="M905 215L968 265V308L905 265Z" fill="#d8d8d8"/></g>
<g stroke="#222" stroke-width="6"><path d="M1322 120L1368 165L1290 215L1243 195Z" fill="#fff"/><path d="M1243 195L1290 215V335L1243 295Z" fill="#e8e8e8"/><path d="M1290 215L1330 190V300L1290 335Z" fill="#aaa"/><path d="M1330 190L1368 165V265L1330 300Z" fill="#c4c4c4"/></g>
<path d="M1368 190L1420 230V260L1385 290L1368 275Z" fill="#e6e6e6" fill-opacity="0.8" stroke="#bbb" stroke-width="4"/></g>
</svg>


<!-- BROWSER -->
<svg class="abs" style="left:400px;top:140px" width="340" height="180" viewBox="400 140 340 180">
<defs>
<radialGradient id="bulbY" cx="0.4" cy="0.35" r="0.7"><stop offset="0" stop-color="#fffbd0"/><stop offset="0.6" stop-color="#f7dd4a"/><stop offset="1" stop-color="#d9a800"/></radialGradient>
<radialGradient id="bulbB" cx="0.4" cy="0.35" r="0.7"><stop offset="0" stop-color="#ffffff"/><stop offset="0.6" stop-color="#cfe0fb"/><stop offset="1" stop-color="#8fb0ea"/></radialGradient>
<g id="bulbOn"><path d="M-1.700 4.200h3.400v3.600h-3.400z" fill="#a0a0a8" stroke="#555" stroke-width="0.600"/><path d="M-2.600 3.200L-1.700 5.200H1.700L2.600 3.200Z" fill="#f1d23a"/><circle cy="-0.300" r="4.600" fill="url(#bulbY)" stroke="#a88400" stroke-width="0.600"/></g>
<g id="bulbOff"><path d="M-1.700 4.200h3.400v3.600h-3.400z" fill="#a0a0a8" stroke="#555" stroke-width="0.600"/><path d="M-2.600 3.200L-1.700 5.200H1.700L2.600 3.200Z" fill="#b8cdf4"/><circle cy="-0.300" r="4.600" fill="url(#bulbB)" stroke="#5a7ab8" stroke-width="0.600"/></g>
<g id="tri"><path d="M0.600 0.400V11.600L8.600 6Z" fill="#fff" stroke="#222" stroke-width="1.200" stroke-linejoin="round"/></g>
<g id="comp" stroke="#333" stroke-width="0.900" stroke-linejoin="round"><path d="M0.500 3.500L3 0.500H8.500V8L6 10.500V3.500Z" fill="#f4f4f4"/><path d="M0.500 3.500H6V14.500H0.500Z" fill="#e6e6e6"/><path d="M6 9.500L8.500 7H15L13 9.500Z" fill="#fafafa"/><path d="M6 9.500H13V14.500H6Z" fill="#e0e0e0"/><path d="M13 9.500L15 7V12.500L13 14.500Z" fill="#bdbdbd"/></g>
<g id="folder" stroke="#333" stroke-width="1" stroke-linejoin="round"><path d="M0.500 0.500H5.500L6.500 2.500H14.500V12H0.500Z" fill="#f2f2f2"/><path d="M0.500 3.500H6" fill="none"/></g>
</defs>
<rect x="404.500" y="142.500" width="323" height="24" fill="#d3d3d3" stroke="#b4b4b4" stroke-width="1"/>
<path d="M414 152.300V158L409.300 155.150ZM419.400 152.300V158L414.700 155.150Z" fill="#111"/>
<text x="431.500" y="157.900" font-family="Liberation Sans, sans-serif" font-size="10.600" fill="#555" textLength="51.400" lengthAdjust="spacingAndGlyphs">BROWSER</text>
<circle cx="711.200" cy="154.700" r="4.500" fill="#111"/><rect x="708.600" y="154" width="5.200" height="1.400" fill="#ddd"/>
<path d="M723.700 148V162" stroke="#777" stroke-width="1"/><path d="M725.300 148V162" stroke="#f5f5f5" stroke-width="1"/>
<!-- row1 -->
<rect x="440" y="172.200" width="163.700" height="19.400" fill="#cbcbcb" fill-opacity="0.920"/><rect x="441.800" y="174.100" width="137.200" height="15.800" fill="#868686"/>
<path d="M431.800 176.400V187.300H420.900Z" fill="#555" stroke="#222" stroke-width="0.800"/>
<use href="#bulbOn" x="450.400" y="180.600"/>
<use href="#comp" x="468.200" y="174.400"/>
<text x="499.200" y="186" font-family="Liberation Sans, sans-serif" font-size="11" font-weight="bold" fill="#fff" textLength="67.800" lengthAdjust="spacingAndGlyphs">Side Plate v2</text>
<circle cx="589.300" cy="182.100" r="6.200" fill="#fff" stroke="#1a1a1a" stroke-width="1.100"/><circle cx="589.300" cy="182.100" r="2.300" fill="#1a1a1a"/>
<!-- row2 -->
<rect x="458.100" y="196.100" width="109.200" height="19.500" fill="#cbcbcb" fill-opacity="0.920"/>
<use href="#tri" x="440" y="200"/><use href="#folder" x="461.200" y="200.200"/>
<text x="491.700" y="210" font-family="Liberation Sans, sans-serif" font-size="11" fill="#444" textLength="67" lengthAdjust="spacingAndGlyphs">Named Views</text>
<!-- row3 -->
<rect x="458.100" y="220.100" width="89.600" height="19.400" fill="#cbcbcb" fill-opacity="0.920"/>
<path d="M462 222.500H471L475.200 226.700V235H462Z" fill="#fafafa" stroke="#333" stroke-width="1" stroke-linejoin="round"/><path d="M471 222.500V226.700H475.200" fill="none" stroke="#333" stroke-width="0.900"/><rect x="461.500" y="234.300" width="14.200" height="3.400" fill="#f0b400" stroke="#a86a00" stroke-width="0.700"/>
<text x="491.100" y="234" font-family="Liberation Sans, sans-serif" font-size="11" fill="#444" textLength="46.500" lengthAdjust="spacingAndGlyphs">Units: mm</text>
<!-- row4 -->
<rect x="458.100" y="244.300" width="94.900" height="19.300" fill="#cbcbcb" fill-opacity="0.920"/>
<use href="#tri" x="440" y="248.200"/><use href="#bulbOff" x="468" y="252.800"/><use href="#folder" x="486" y="248.300"/>
<text x="516.300" y="258.200" font-family="Liberation Sans, sans-serif" font-size="11" fill="#444" textLength="27.500" lengthAdjust="spacingAndGlyphs">Origin</text>
<!-- row5 -->
<rect x="458.100" y="268.400" width="122.500" height="19.200" fill="#cbcbcb" fill-opacity="0.920"/>
<use href="#tri" x="440" y="272.200"/><use href="#bulbOn" x="468" y="276.800"/>
<g stroke="#333" stroke-width="1" stroke-linejoin="round"><path d="M486.500 274.500L489.500 271.300H501.500L498.500 274.500Z" fill="#fafafa"/><path d="M486.500 274.500H498.500V285Q492 286 486.500 285Z" fill="#e9e9e9"/><path d="M498.500 274.500L501.500 271.300V282L498.500 285Z" fill="#c4c4c4"/></g>
<text x="516.300" y="282.200" font-family="Liberation Sans, sans-serif" font-size="11" fill="#444" textLength="54.900" lengthAdjust="spacingAndGlyphs">Side Plate:1</text>
<!-- row6 -->
<rect x="458.100" y="292.100" width="167.500" height="19.500" fill="#cbcbcb" fill-opacity="0.920"/>
<use href="#tri" x="440" y="296.200"/><use href="#bulbOn" x="468" y="300.800"/><use href="#comp" x="486.500" y="294.600"/>
<g fill="none" stroke="#222" stroke-width="2.200" stroke-linecap="round"><path d="M517.300 300.200L520.500 297Q523.200 294.600 525.600 297Q527.800 299.600 525.400 302L523.500 303.900"/><path d="M520.800 303.600L517.600 306.800Q514.900 309.200 512.500 306.800Q510.300 304.200 512.700 301.800L514.600 299.900"/><path d="M516.600 304.400L521.500 299.500" stroke-width="1.800"/></g>
<text x="541.100" y="306.200" font-family="Liberation Sans, sans-serif" font-size="11" fill="#444" textLength="75.100" lengthAdjust="spacingAndGlyphs">Tension 20 v1:1</text>
</svg>

<!-- COMMENTS -->
<svg class="abs" style="left:400px;top:955px" width="340" height="34" viewBox="400 955 340 34">
<rect x="404.500" y="960.500" width="323" height="24" fill="#d3d3d3" stroke="#b4b4b4" stroke-width="1"/>
<text x="431.200" y="976.200" font-family="Liberation Sans, sans-serif" font-size="10.600" fill="#555" textLength="56.200" lengthAdjust="spacingAndGlyphs">COMMENTS</text>
<circle cx="711.300" cy="972.300" r="4.600" fill="#111"/><path d="M708.600 972.300H714M711.300 969.600V975" stroke="#eee" stroke-width="1.400"/>
<path d="M723.700 966V979" stroke="#777" stroke-width="1"/><path d="M725.300 966V979" stroke="#f5f5f5" stroke-width="1"/>
</svg>
<!-- NAVBAR -->
<div class="abs" style="left:1036px;top:961px;width:145px;height:24px;background:#cbcbcb;"></div>
<div class="abs" style="left:1188px;top:961px;width:93px;height:24px;background:#cbcbcb;"></div>
<svg class="abs" style="left:1030px;top:955px" width="260" height="35" viewBox="0 0 1549 209">
<g fill="#222"><path d="M180 95h34l-17 22zM841 95h34l-17 22zM1068 95h34l-17 22zM1251 95h34l-17 22zM1436 95h34l-17 22z"/></g>
<path d="M95 150V85H82L103 58L124 85H111V150Z" fill="#fff" stroke="#222" stroke-width="5" stroke-linejoin="round"/><path d="M120 95Q150 100 145 115Q135 135 75 128" fill="none" stroke="#222" stroke-width="7"/><path d="M85 95Q55 100 58 115" fill="none" stroke="#222" stroke-width="7"/><path d="M62 128L88 112V142Z" fill="#222"/>
<path d="M253 92H343V150H253Z" fill="#f2f2f2" stroke="#333" stroke-width="6"/><rect x="272" y="110" width="53" height="22" fill="#b8bcc8" stroke="#333" stroke-width="5"/><path d="M262 90L285 68L300 80L325 68V90" fill="#ccc" stroke="#555" stroke-width="5"/>
<path d="M425 108Q410 95 418 88Q430 88 440 105V70Q447 60 453 70V98V62Q460 52 467 62V98V68Q474 60 480 70V100V82Q488 75 493 85V120Q490 145 470 152H445Q430 140 425 108Z" fill="#fff" stroke="#333" stroke-width="5" stroke-linejoin="round"/>
<circle cx="588" cy="100" r="24" fill="#e6f0f8" stroke="#444" stroke-width="7"/><path d="M606 120L632 143" stroke="#333" stroke-width="11" stroke-linecap="round"/><path d="M643 62V86M631 74H655M631 98H655" stroke="#222" stroke-width="5"/>
<rect x="718" y="60" width="87" height="90" fill="none" stroke="#444" stroke-width="4" stroke-dasharray="9 7"/><circle cx="755" cy="95" r="34" fill="#eaf2f8" stroke="#444" stroke-width="7"/><path d="M780 122L802 146" stroke="#333" stroke-width="12" stroke-linecap="round"/>
<rect x="962" y="65" width="88" height="66" rx="5" fill="#f4f4f4" stroke="#333" stroke-width="6"/><rect x="974" y="76" width="64" height="42" fill="#8fb0e6" stroke="#3a5fa8" stroke-width="4"/><path d="M995 131H1017L1027 148H985Z" fill="#eee" stroke="#555" stroke-width="4"/>
<rect x="1148" y="62" width="89" height="88" fill="#f4f4f4" stroke="#444" stroke-width="5"/><path d="M1166 62V150M1184 62V150M1202 62V150M1220 62V150M1148 80H1237M1148 98H1237M1148 116H1237M1148 134H1237" stroke="#555" stroke-width="4"/>
<rect x="1330" y="68" width="86" height="72" rx="6" fill="#c5d6f2" stroke="#2a4a96" stroke-width="6"/><path d="M1373 68V140M1330 104H1416" stroke="#2a4a96" stroke-width="7"/><g fill="#8fb0e6" stroke="#5a7fc8" stroke-width="3"><rect x="1343" y="79" width="20" height="15"/><rect x="1384" y="79" width="20" height="15"/><rect x="1343" y="114" width="20" height="15"/><rect x="1384" y="114" width="20" height="15"/></g>
</svg>
<!-- TIMELINE -->
<svg class="abs" style="left:400px;top:989px" width="400" height="48" viewBox="400 989 400 48">
<g fill="#4a4a4a"><path d="M411 1005.300h2.200v13.500h-2.200zM422.900 1005.300V1018.800L413.600 1012.050Z"/>
<path d="M446 1006.600V1017.500L435.200 1012.050ZM447 1009h1.800v6.200h-1.800z"/>
<path d="M462 1006.600V1017.500L472.800 1012.050ZM459.400 1009h1.800v6.200h-1.800z"/>
<path d="M486.200 1004.600V1019.500L497.800 1012.050Z"/>
<path d="M510.700 1005.300V1018.800L520 1012.050ZM520.600 1005.300h2.200v13.500h-2.200z"/></g>
<g stroke="#333" stroke-width="1" stroke-linejoin="round"><path d="M546.600 1009L550 1005.800H562L558.600 1009Z" fill="#fafafa"/><path d="M546.600 1009H558.600V1020.300Q552 1021.300 546.600 1020.300Z" fill="#ececec"/><path d="M558.600 1009L562 1005.800V1017L558.600 1020.300Z" fill="#c4c4c4"/></g>
<rect x="570.600" y="1005.800" width="15" height="15" fill="#fff" stroke="#111" stroke-width="1.300"/><path d="M573 1018H584M573 1018L581 1010" stroke="#333" stroke-width="1.300" fill="none"/><path d="M579.500 1011.500L585 1005L587 1007L581.500 1013Z" fill="#f2c230" stroke="#a87800" stroke-width="0.600"/><rect x="572" y="1015" width="4" height="4" fill="#7fa6e0"/>
<g stroke="#3a5a96" stroke-width="0.900" stroke-linejoin="round"><path d="M594.300 1008.500L596.500 1006H603.300L601 1008.500Z" fill="#dbe8f8"/><path d="M594.300 1008.500H601V1020.500H594.300Z" fill="#a9c4ea"/><path d="M601 1008.500L603.300 1006V1018L601 1020.500Z" fill="#7f9fd0"/></g><path d="M607.400 1020V1007M605 1009.500L607.400 1006.500L609.800 1009.500" stroke="#222" stroke-width="1.200" fill="none"/>
<g stroke="#333" stroke-width="1" stroke-linejoin="round"><path d="M618.400 1009L621.800 1005.800H633.800L630.400 1009Z" fill="#fafafa"/><path d="M618.400 1009H630.400V1020.300Q624 1021.300 618.400 1020.300Z" fill="#ececec"/><path d="M630.400 1009L633.800 1005.800V1017L630.400 1020.300Z" fill="#c4c4c4"/></g>
<g fill="none" stroke="#222" stroke-width="1.800" stroke-linecap="round"><path d="M625 1011.500L626.800 1009.700Q628.600 1008.300 630 1009.700Q631.300 1011.300 630 1012.800L627.800 1015"/><path d="M626.500 1014.500L624.600 1016.500Q622.800 1018 621.400 1016.500Q620 1015 621.400 1013.400L623.500 1011.300"/></g>
<path d="M632 999H644.200V1001L639.500 1005.800H636.800L632 1001Z" fill="#555"/><path d="M637.900 1004V1030.400" stroke="#555" stroke-width="2"/>
<path d="M554.300 1025.500V1030H626.600V1025.500M577.800 1025.500V1030M602.100 1025.500V1030" fill="none" stroke="#555" stroke-width="1.700"/>
</svg>

</body>
</html>
